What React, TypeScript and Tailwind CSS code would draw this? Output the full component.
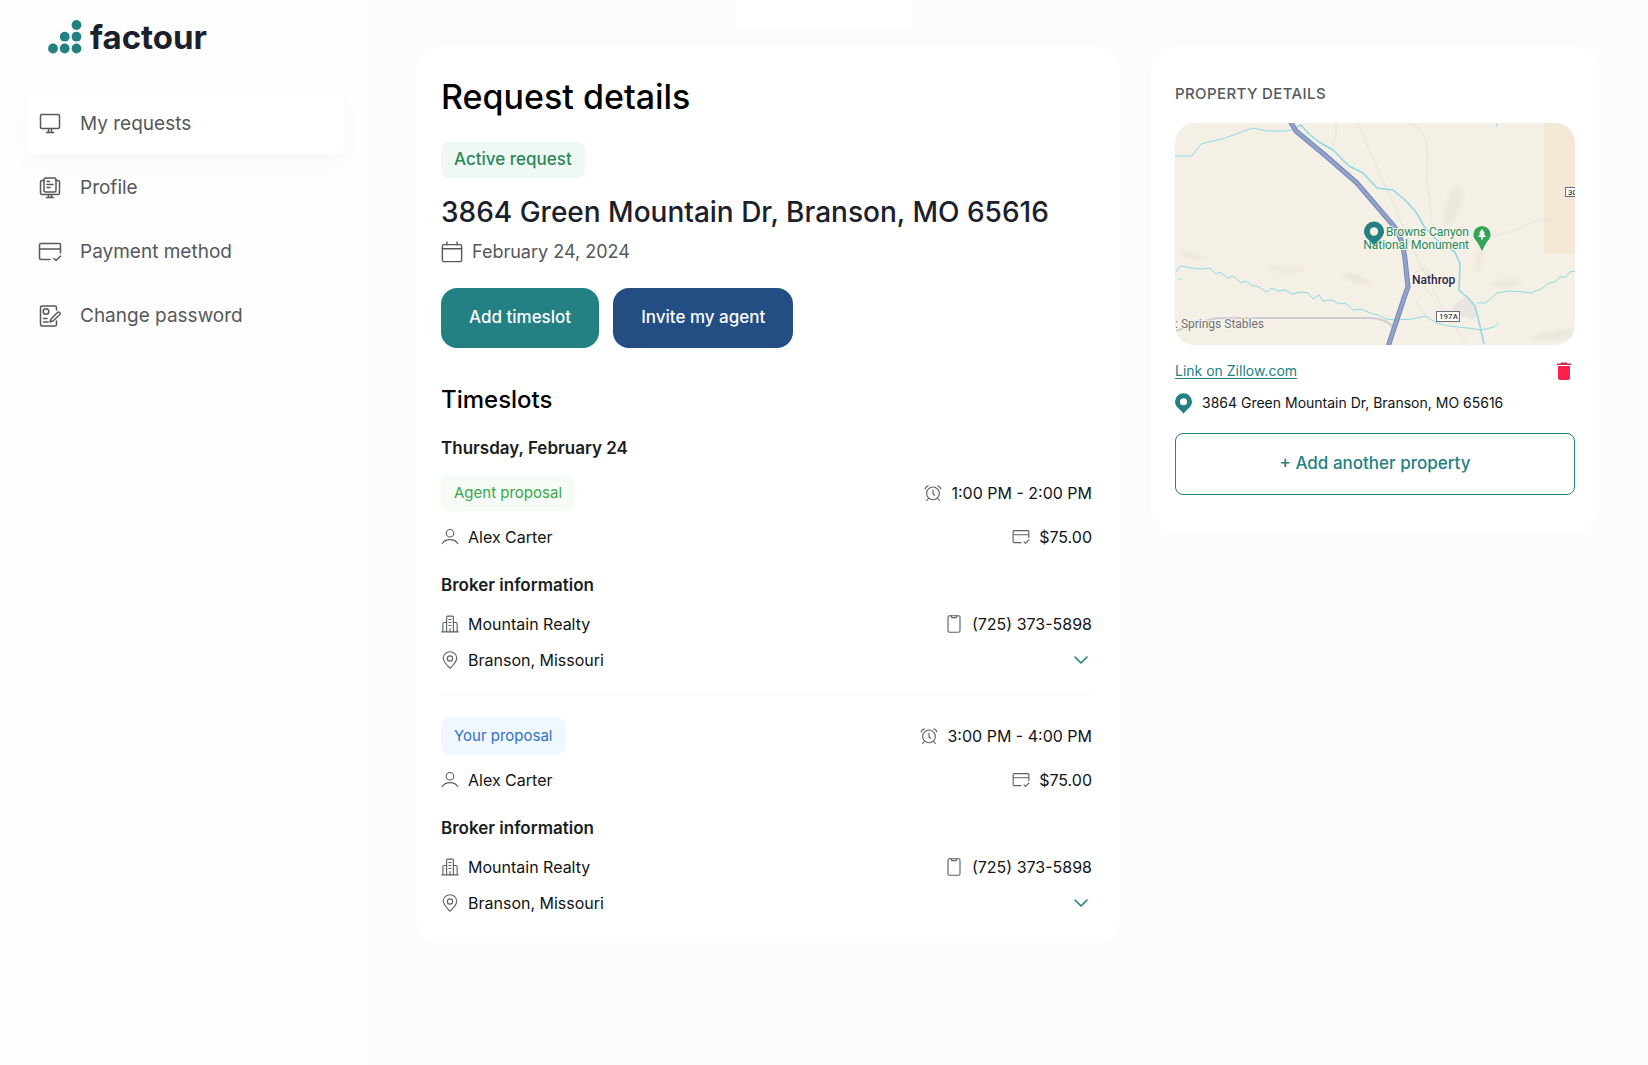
import type { ReactNode } from "react";

interface IconProps {
  className?: string;
}

interface Timeslot {
  id: number;
  proposal: "agent" | "own";
  time: string;
  person: string;
  price: string;
  broker: string;
  phone: string;
  location: string;
}

const timeslots: Timeslot[] = [
  {
    id: 1,
    proposal: "agent",
    time: "1:00 PM - 2:00 PM",
    person: "Alex Carter",
    price: "$75.00",
    broker: "Mountain Realty",
    phone: "(725) 373-5898",
    location: "Branson, Missouri",
  },
  {
    id: 2,
    proposal: "own",
    time: "3:00 PM - 4:00 PM",
    person: "Alex Carter",
    price: "$75.00",
    broker: "Mountain Realty",
    phone: "(725) 373-5898",
    location: "Branson, Missouri",
  },
];

function Line({ className, children }: IconProps & { children: ReactNode }) {
  return (
    <svg
      viewBox="0 0 24 24"
      fill="none"
      stroke="currentColor"
      strokeWidth="1.5"
      strokeLinecap="round"
      strokeLinejoin="round"
      className={className}
      aria-hidden="true"
    >
      {children}
    </svg>
  );
}

function MonitorIcon({ className }: IconProps) {
  return (
    <Line className={className}>
      <rect x="2.5" y="2.5" width="19" height="14" rx="1.5" />
      <path d="M10.5 16.500v3.500M13.500 16.500v3.500M8.500 20.500h7" />
    </Line>
  );
}

function ProfileIcon({ className }: IconProps) {
  return (
    <Line className={className}>
      <rect x="6" y="2" width="12" height="14" rx="1.5" />
      <path d="M6 4.500H4A1.500 1.500 0 0 0 2.500 6v11A1.500 1.500 0 0 0 4 18.500h16a1.500 1.500 0 0 0 1.500-1.500V6A1.500 1.500 0 0 0 20 4.500h-2" />
      <path d="M10.500 18.500V21M13.500 18.500V21M8.500 21.500h7M9 5.500h2.500M9 8.500h6M9 11.500h3" />
    </Line>
  );
}

function CardCheckIcon({ className }: IconProps) {
  return (
    <Line className={className}>
      <path d="M12 19.500H3A1.500 1.500 0 0 1 1.500 18V5A1.500 1.500 0 0 1 3 3.500h18A1.500 1.500 0 0 1 22.500 5v8M1.500 9h21M16 18.500l2 2 4.500-4.500" />
    </Line>
  );
}

function PasswordIcon({ className }: IconProps) {
  return (
    <Line className={className}>
      <path d="M18.500 6V3.500A1.500 1.500 0 0 0 17 2H4a1.500 1.500 0 0 0-1.500 1.500v17A1.500 1.500 0 0 0 4 22h13a1.500 1.500 0 0 0 1.500-1.500V17" />
      <circle cx="8" cy="7.5" r="2.800" />
      <path d="M5.500 14.500H9M5.500 18H10M12 18l1-3 6.500-6.500a1.500 1.500 0 0 1 2.200 2.200L15 17z" />
    </Line>
  );
}

function CalendarIcon({ className }: IconProps) {
  return (
    <Line className={className}>
      <rect x="1.5" y="4" width="21" height="18.5" rx="1.5" />
      <path d="M1.500 8.500h21M6.500 1v3M17.500 1v3" />
    </Line>
  );
}

function AlarmIcon({ className }: IconProps) {
  return (
    <Line className={className}>
      <circle cx="12" cy="12.5" r="8.5" />
      <path d="M12 8v5l2 2M1.500 6.500C2 4.500 3.500 3 5.500 2.500M22.500 6.500c-.5-2-2-3.500-4-4M6 19l-2.500 3M18 19l2.500 3" />
    </Line>
  );
}

function UserIcon({ className }: IconProps) {
  return (
    <Line className={className}>
      <circle cx="12" cy="7" r="5" />
      <path d="M1.500 21c2-3.500 6-5.500 10.500-5.500s8.500 2 10.500 5.500" />
    </Line>
  );
}

function BuildingIcon({ className }: IconProps) {
  return (
    <Line className={className}>
      <path d="M1 22.500h22M7.500 22.500V3A1.500 1.500 0 0 1 9 1.500h6A1.500 1.500 0 0 1 16.500 3v19.500M7.500 10H4a1.500 1.500 0 0 0-1.500 1.500v11M16.500 10H20a1.500 1.500 0 0 1 1.500 1.500v11" />
      <path d="M10.500 6h3M10.500 10h3M10.500 14h3M12 18v4.500" />
    </Line>
  );
}

function LocationIcon({ className }: IconProps) {
  return (
    <Line className={className}>
      <path d="M12 23c4-4.500 9-8.500 9-13.500a9 8.500 0 0 0-18 0c0 5 5 9 9 13.500z" />
      <circle cx="12" cy="10" r="3.5" />
    </Line>
  );
}

function PhoneIcon({ className }: IconProps) {
  return (
    <Line className={className}>
      <rect x="4" y="1" width="16" height="22" rx="2" />
      <path d="M8 1l1 2.500h6L16 1" />
    </Line>
  );
}

const pinPath =
  "M10 0a10 10 0 0 1 10 10c0 4-3 7-5.500 9.200C12.500 21 11 22.500 10 24c-1-1.500-2.500-3-4.500-4.800C3 17 0 14 0 10A10 10 0 0 1 10 0zm0 5.800a4.200 4.200 0 1 0 0 8.400 4.200 4.200 0 0 0 0-8.400z";

function MapPin({ className }: IconProps) {
  return (
    <svg viewBox="0 0 20 24" className={className} aria-hidden="true">
      <path fill="#238083" fillRule="evenodd" d={pinPath} />
    </svg>
  );
}

function Logo() {
  const dots = [
    [28.5, 5],
    [16.7, 16.7],
    [28.5, 16.7],
    [5, 28.5],
    [16.7, 28.5],
    [28.5, 28.5],
  ];
  return (
    <a href="#" className="flex h-12 items-center gap-2 pl-12">
      <svg viewBox="0 0 34 34" className="size-[34px]" aria-hidden="true">
        {dots.map(([cx, cy]) => (
          <circle key={`${cx}-${cy}`} cx={cx} cy={cy} r="4.9" fill="#238083" />
        ))}
      </svg>
      <span className="text-[33px] leading-10 font-bold text-[#1a202c]">factour</span>
    </a>
  );
}

const navItems = [
  { label: "My requests", Icon: MonitorIcon, active: true },
  { label: "Profile", Icon: ProfileIcon, active: false },
  { label: "Payment method", Icon: CardCheckIcon, active: false },
  { label: "Change password", Icon: PasswordIcon, active: false },
];

function Sidebar() {
  return (
    <aside className="w-[368px] shrink-0 bg-[#fefefe] pt-[13px]">
      <Logo />
      <nav className="mt-[33px] flex flex-col gap-1 pr-6 pl-7">
        {navItems.map(({ label, Icon, active }) => (
          <a
            key={label}
            href="#"
            className={`flex h-[60px] items-center gap-[18px] rounded-lg pl-2.5 text-[19px] text-[#55585c] ${
              active ? "bg-white shadow-[0_10px_20px_rgba(0,0,0,0.03)]" : ""
            }`}
          >
            <Icon className="size-6" />
            {label}
          </a>
        ))}
      </nav>
    </aside>
  );
}

function Row({ left, right }: { left: ReactNode; right: ReactNode }) {
  return (
    <div className="flex items-center justify-between">
      <div className="flex items-center gap-[9px]">{left}</div>
      <div className="flex items-center gap-[9px]">{right}</div>
    </div>
  );
}

function TimeslotItem({ slot }: { slot: Timeslot }) {
  const own = slot.proposal === "own";
  return (
    <article className="text-base leading-6 text-[#111315]">
      <Row
        left={
          <span
            className={`flex h-9 items-center rounded-lg px-[13px] text-[15px] ${
              own ? "bg-[#eef8fe] text-[#3670c4]" : "bg-[#f5fcf6] text-[#3aa64c]"
            }`}
          >
            {own ? "Your proposal" : "Agent proposal"}
          </span>
        }
        right={
          <>
            <AlarmIcon className="size-[18px] text-[#5c6064]" />
            {slot.time}
          </>
        }
      />
      <div className="mt-3.5">
        <Row
          left={
            <>
              <UserIcon className="size-[18px] text-[#5c6064]" />
              {slot.person}
            </>
          }
          right={
            <>
              <CardCheckIcon className="size-[18px] text-[#5c6064]" />
              {slot.price}
            </>
          }
        />
      </div>
      <h4 className="mt-6 text-[17px] font-semibold text-[#1a1d21]">Broker information</h4>
      <div className="mt-[15px] space-y-3">
        <Row
          left={
            <>
              <BuildingIcon className="size-[18px] text-[#5c6064]" />
              {slot.broker}
            </>
          }
          right={
            <>
              <PhoneIcon className="size-[18px] text-[#5c6064]" />
              {slot.phone}
            </>
          }
        />
        <Row
          left={
            <>
              <LocationIcon className="size-[18px] text-[#5c6064]" />
              {slot.location}
            </>
          }
          right={
            <button type="button" aria-label="Show more" className="mr-1 text-[#238083]">
              <svg
                viewBox="0 0 14 8"
                fill="none"
                stroke="currentColor"
                strokeWidth="1.6"
                strokeLinecap="round"
                strokeLinejoin="round"
                className="h-2 w-3.5"
              >
                <path d="M1 1l6 6 6-6" />
              </svg>
            </button>
          }
        />
      </div>
    </article>
  );
}

function RequestCard() {
  return (
    <section className="min-w-0 flex-1 rounded-3xl bg-white pt-[27px] pr-7 pb-7 pl-[25px]">
      <h1 className="text-[34px] leading-12 font-medium text-black">Request details</h1>
      <span className="mt-[21px] flex h-9 w-fit items-center rounded-lg bg-[#eff9f4] px-[13px] text-[17px] font-medium text-[#2f855a]">
        Active request
      </span>
      <h2 className="mt-3.5 text-[28px] leading-10 font-medium text-[#1a202c]">
        3864 Green Mountain Dr, Branson, MO 65616
      </h2>
      <p className="mt-2 flex items-center gap-[9px] text-[18px] leading-6 text-[#55585c]">
        <CalendarIcon className="size-[22px]" />
        February 24, 2024
      </p>
      <div className="mt-6 flex gap-3.5 text-[17px] font-medium text-white">
        <button type="button" className="h-[60px] rounded-2xl bg-[#238083] px-7">
          Add timeslot
        </button>
        <button type="button" className="h-[60px] rounded-2xl bg-[#234e84] px-7">
          Invite my agent
        </button>
      </div>
      <h3 className="mt-9 text-2xl leading-8 font-medium text-black">Timeslots</h3>
      <p className="mt-5 mb-[15px] text-[17px] leading-6 font-semibold text-[#1a1d21]">
        Thursday, February 24
      </p>
      {timeslots.map((slot, i) => (
        <div key={slot.id} className={i > 0 ? "mt-[22px] border-t border-[#f5f5f5] pt-[23px]" : ""}>
          <TimeslotItem slot={slot} />
        </div>
      ))}
    </section>
  );
}

const highway = "M115-2l6 10 30 25 31 27 36 42c8 10 10 20 12 34l3 28-4 11-16 49";

function PropertyMap() {
  return (
    <svg
      viewBox="0 0 400 222"
      className="block w-full rounded-[20px]"
      fontFamily="Roboto, sans-serif"
      role="img"
      aria-label="Map of the area around Nathrop"
    >
      <defs>
        <filter id="relief">
          <feGaussianBlur stdDeviation="2" />
        </filter>
      </defs>
      <rect width="400" height="222" fill="#f5f0e6" />
      <rect x="369" width="31" height="131" fill="#f3e8d5" />

      {/* hills */}
      <g fill="#ebe7db" filter="url(#relief)">
        <path d="M278 66c6-5 12-4 10 6-2 12-8 26-14 30-6 2-7-6-4-14 3-9 4-16 8-22z" />
        <path d="M2 130c10-2 24 2 34 6-8 2-24 0-34-6zM90 144c14-2 30 0 42 2-8 5-30 6-42-2zM165 148c12 2 24 6 34 12-12 4-28-2-34-12zM315 160c12-5 26-4 34-1-10 7-24 6-34 1zM302 130l6-4-2 20-6 6zM352 215c14-6 30-6 46-10v8c-14 4-30 6-46 2z" />
      </g>
      <path fill="#e9e6e2" d="M277 183l14-9 8 5 3 12-4 6-20-6z" />

      {/* minor roads */}
      <g fill="none" stroke="#e5e2da" strokeWidth="1">
        <path d="M161 0v16l-4 6M182 0l28 62 26 60 30 60 26 40" />
        <path d="M234 0c12 5 18 14 18 26 2 16-2 32 2 44 2 10 0 24 4 32l8 14M314 114c16-4 28-6 38-13l22-6" />
        <path d="M236 152l14-8 12 20M240 176l14 22M246 160l12 14" />
      </g>

      {/* rivers */}
      <g fill="none" stroke="#8fd9e4" strokeWidth="1" strokeLinejoin="round">
        <path d="M0 33h17l9-12 24-6 14-5 14-5 14 3h20l8-2" />
        <path
          d="M122 4l4-2 8 9 10 8 14 8 16 16 14 7 14 15 16 2 12 10 11 12 9 16 14 14 16 10 5 12-1 26 9 8 7 8 5 20 4 18"
          strokeWidth="1.6"
        />
        <path d="M0 150l5-7 12 2 9 1 9-1 6 6 4-2 8 6 5-2 8 7 5-2 5 4 8 2 7 5 6-4 6 3 7-1 7 4 9-2 7 1 5 6 6-4 4 6 9-1 7 4 6-1 8 7 8-1 9 4 8 2 8 4 10 1 16-1 14-3 10 7 12 3 20 2 14 2 12-3 5-4" />
        <path d="M302 180h8l4-3 8-7 12-2 14 1 8 1 10-4 8-6 6-1 5-5h6l4-5 5-1" />
        <path d="M3 156h3M322 0v4" />
      </g>

      <path d="M0 208c16-4 30-12 44-13h150c10 0 18 2 24 9" fill="none" stroke="#d0ccd5" strokeWidth="2" />
      <path d={highway} fill="none" stroke="#7386b4" strokeWidth="5" />
      <path d={highway} fill="none" stroke="#91a2cb" strokeWidth="3" />

      <g fontSize="12" stroke="#f8f5ee" strokeWidth="2" paintOrder="stroke">
        <text x="294" y="113" fill="#1d8a5b" textAnchor="end">
          Browns Canyon
        </text>
        <text x="294" y="126" fill="#1d8a5b" textAnchor="end">
          National Monument
        </text>
        <text x="237" y="161" fontWeight="500" fill="#2b2244">
          Nathrop
        </text>
        <text x="0" y="205" fill="#6f7074">
          : Springs Stables
        </text>
      </g>

      <path transform="translate(189 98.5)" fill="#238083" fillRule="evenodd" d={pinPath} />
      <path
        fill="#34a556"
        d="M307 103a8.600 8.600 0 0 1 8.600 8.600c0 4-3 6-5 9.400-1.600 2.600-2.400 5-3.600 7-1.200-2-2-4.400-3.600-7-2-3.400-5-5.400-5-9.400A8.600 8.600 0 0 1 307 103z"
      />
      <path fill="#fff" d="M307 106l3 4.500h-1.500l2.500 3.500h-3.200v2.500h-1.600V114H303l2.500-3.500H304z" />

      <g fill="#fff" stroke="#6b6e78" strokeWidth="1">
        <rect x="261.5" y="188.5" width="23" height="10" />
        <rect x="390.5" y="64.500" width="20" height="9" />
      </g>
      <g fontSize="8" fontWeight="500" fill="#3c3f48">
        <text x="264" y="196">197A</text>
        <text x="393" y="72">30</text>
      </g>
    </svg>
  );
}

function PropertyCard() {
  return (
    <section className="w-[448px] shrink-0 rounded-3xl bg-white px-6 py-9">
      <h2 className="text-[15px] leading-6 font-medium tracking-wide text-[#55585c]">
        PROPERTY DETAILS
      </h2>
      <div className="mt-[17px]">
        <PropertyMap />
      </div>
      <div className="mt-3.5 flex h-6 items-center justify-between">
        <a href="#" className="text-sm text-[#238083] underline underline-offset-2">
          Link on Zillow.com
        </a>
        <button type="button" aria-label="Delete property" className="mr-1">
          <svg viewBox="0 0 14 18" className="h-[18px] w-3.5">
            <path fill="#c92a5b" d="M4 0.500h6l.5 1H14V3H0V1.500h3.500z" />
            <path fill="#ff1f4b" d="M1 4h12v12a2 2 0 0 1-2 2H3a2 2 0 0 1-2-2z" />
          </svg>
        </button>
      </div>
      <p className="mt-2 flex h-6 items-center gap-2.5 text-sm text-[#111315]">
        <MapPin className="h-[21px] w-[17px]" />
        3864 Green Mountain Dr, Branson, MO 65616
      </p>
      <button
        type="button"
        className="mt-[18px] h-[62px] w-full rounded-lg border border-[#238083] text-[17px] font-medium text-[#238083]"
      >
        + Add another property
      </button>
    </section>
  );
}

export default function App() {
  return (
    <div className="flex min-h-screen bg-[#fcfcfc] font-[Inter,sans-serif]">
      <Sidebar />
      <main className="min-w-0 flex-1 pr-[49px] pb-12 pl-12">
        <div className="ml-80 h-[30px] w-44 rounded-b bg-white" />
        <div className="mt-4 flex items-start gap-[31px]">
          <RequestCard />
          <PropertyCard />
        </div>
      </main>
    </div>
  );
}
